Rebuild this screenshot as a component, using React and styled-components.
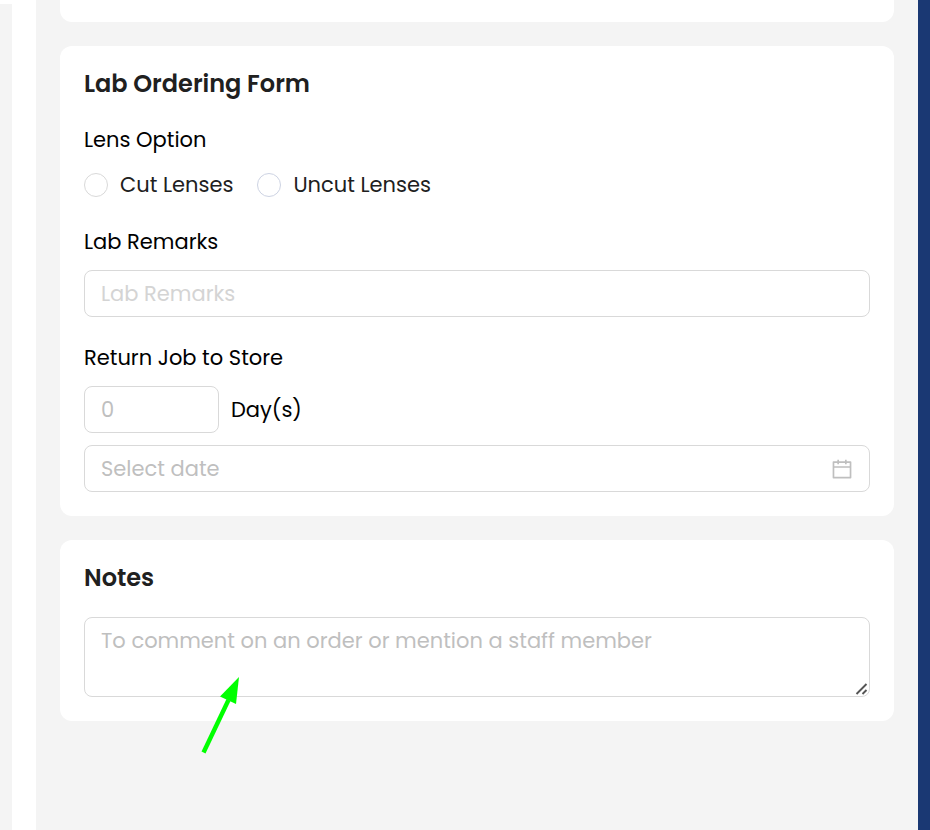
import { useState } from 'react'
import styled, { createGlobalStyle } from 'styled-components'

const GlobalStyle = createGlobalStyle`
  *,
  *::before,
  *::after {
    box-sizing: border-box;
  }

  body {
    margin: 0;
    background: #ffffff;
    color: #000000;
    font-family: Poppins, Inter, sans-serif;
    font-size: 21px;
    line-height: 33px;
  }
`

const Page = styled.div`
  display: flex;
  min-height: 100vh;
`

const Rail = styled.div`
  width: 12px;
  margin-top: 4px;
  margin-right: 24px;
  background: #f4f4f4;
`

const Main = styled.main`
  flex: 1;
  min-width: 0;
  padding: 0 24px 24px;
  background: #f4f4f4;
`

const Edge = styled.div`
  width: 12px;
  background: #1a3873;
`

const Card = styled.section`
  margin-bottom: 24px;
  padding: 24px;
  border-radius: 12px;
  background: #ffffff;
`

const CardEnd = styled.div`
  height: 22px;
  margin-bottom: 24px;
  border-radius: 0 0 12px 12px;
  background: #ffffff;
`

const Title = styled.h2`
  margin: 0 0 26px;
  color: #202020;
  font-size: 24px;
  font-weight: 600;
  line-height: 27px;
`

const Fields = styled.div`
  display: grid;
  gap: 24px;
`

const Field = styled.div`
  display: grid;
  gap: 12px;
`

const RadioField = styled.fieldset`
  min-width: 0;
  margin: 0;
  padding: 0;
  border: 0;
`

const Legend = styled.legend`
  margin-bottom: 12px;
  padding: 0;
`

const Options = styled.div`
  display: flex;
  flex-wrap: wrap;
  gap: 24px;
`

const Option = styled.label`
  display: flex;
  align-items: center;
  gap: 12px;
  color: #202020;
  cursor: pointer;
`

const Radio = styled.input`
  width: 24px;
  height: 24px;
  margin: 0;
  appearance: none;
  border: 1px solid ${({ $border }) => $border};
  border-radius: 50%;
  background: #ffffff;

  &:checked {
    border: 7px solid #1a3873;
  }
`

const Input = styled.input`
  width: ${({ $width }) => $width || '100%'};
  height: 47px;
  padding: 0 16px;
  border: 1px solid #d9d9d9;
  border-radius: 8px;
  background: #ffffff;
  color: #202020;
  font: inherit;
  outline: none;

  &::placeholder {
    color: ${({ $hint }) => $hint || '#bfbfbf'};
    opacity: 1;
  }

  &:focus {
    border-color: #1a3873;
  }
`

const Days = styled.div`
  display: flex;
  align-items: center;
  gap: 12px;
`

const DatePicker = styled.div`
  position: relative;
`

const DateButton = styled.button`
  position: absolute;
  top: 0;
  right: 16px;
  display: flex;
  align-items: center;
  height: 100%;
  padding: 0;
  border: 0;
  background: none;
  color: #bfbfbf;
  cursor: pointer;
`

const NoteBox = styled.div`
  position: relative;
`

const TextArea = styled.textarea`
  display: block;
  width: 100%;
  height: 80px;
  padding: 6px 16px;
  border: 1px solid #d9d9d9;
  border-radius: 8px;
  background: #ffffff;
  color: #202020;
  font: inherit;
  outline: none;
  resize: vertical;

  &::placeholder {
    color: #bfbfbf;
    opacity: 1;
  }

  &::-webkit-resizer {
    display: none;
  }
`

const Grip = styled.svg`
  position: absolute;
  right: 1px;
  bottom: 1px;
  pointer-events: none;
`

const Pointer = styled.svg`
  position: absolute;
  top: 60px;
  left: 116px;
  pointer-events: none;
`

function CalendarIcon() {
  return (
    <svg width="24" height="24" viewBox="0 0 1024 1024" fill="currentColor" aria-hidden="true">
      <path d="M880 184H712v-64c0-4.400-3.600-8-8-8h-56c-4.400 0-8 3.600-8 8v64H384v-64c0-4.400-3.600-8-8-8h-56c-4.400 0-8 3.600-8 8v64H144c-17.700 0-32 14.300-32 32v664c0 17.700 14.300 32 32 32h736c17.700 0 32-14.300 32-32V216c0-17.700-14.300-32-32-32zm-40 656H184V460h656v380zM184 392V256h128v48c0 4.400 3.600 8 8 8h56c4.400 0 8-3.600 8-8v-48h256v48c0 4.400 3.600 8 8 8h56c4.400 0 8-3.600 8-8v-48h128v136H184z" />
    </svg>
  )
}

function LabOrderingForm() {
  const [lens, setLens] = useState('')

  return (
    <Card>
      <Title>Lab Ordering Form</Title>
      <Fields>
        <RadioField>
          <Legend>Lens Option</Legend>
          <Options>
            <Option>
              <Radio
                type="radio"
                name="lens"
                $border="#d9d9d9"
                checked={lens === 'cut'}
                onChange={() => setLens('cut')}
              />
              Cut Lenses
            </Option>
            <Option>
              <Radio
                type="radio"
                name="lens"
                $border="#cdd3e3"
                checked={lens === 'uncut'}
                onChange={() => setLens('uncut')}
              />
              Uncut Lenses
            </Option>
          </Options>
        </RadioField>

        <Field>
          <label htmlFor="remarks">Lab Remarks</label>
          <Input id="remarks" type="text" placeholder="Lab Remarks" $hint="#d4d4d4" />
        </Field>

        <Field>
          <label htmlFor="days">Return Job to Store</label>
          <Days>
            <Input id="days" type="text" inputMode="numeric" placeholder="0" $width="135px" />
            <span>Day(s)</span>
          </Days>
          <DatePicker>
            <Input type="text" placeholder="Select date" aria-label="Return date" />
            <DateButton type="button" aria-label="Open calendar">
              <CalendarIcon />
            </DateButton>
          </DatePicker>
        </Field>
      </Fields>
    </Card>
  )
}

function Notes() {
  return (
    <Card>
      <Title id="notes-title">Notes</Title>
      <NoteBox>
        <TextArea
          aria-labelledby="notes-title"
          placeholder="To comment on an order or mention a staff member"
        />
        <Grip width="14" height="14" viewBox="0 0 14 14" aria-hidden="true">
          <path d="M1.500 12L11.500 2M7.500 12L11.500 8" stroke="#555555" strokeWidth="1.900" />
        </Grip>
        <Pointer width="42" height="78" viewBox="0 0 42 78" aria-hidden="true">
          <path d="M3.500 75.500L28.500 23" stroke="#00ff00" strokeWidth="4.400" />
          <path d="M39 0L20 19.500L36 27Z" fill="#00ff00" />
        </Pointer>
      </NoteBox>
    </Card>
  )
}

function App() {
  return (
    <>
      <GlobalStyle />
      <Page>
        <Rail />
        <Main>
          <CardEnd />
          <LabOrderingForm />
          <Notes />
        </Main>
        <Edge />
      </Page>
    </>
  )
}

export default App
